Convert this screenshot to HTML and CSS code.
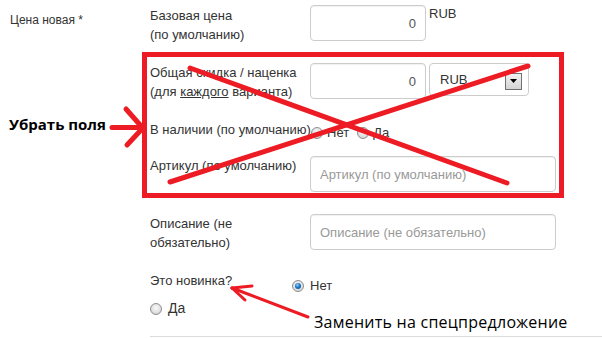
FILE: index.html
```html
<!DOCTYPE html>
<html lang="ru">
<head>
<meta charset="utf-8">
<link rel="stylesheet" href="styles.css">
</head>
<body>
<div class="page">
  <div class="group">
    <div class="group-label">Цена новая *</div>
    <div class="fields">
      <div class="grid">
        <label class="lbl lbl-first">Базовая цена<br>(по умолчанию)</label>
        <div class="ctrl">
          <input class="inp inp-num" type="text" value="0">
          <span class="unit">RUB</span>
        </div>

        <label class="lbl">Общая скидка / наценка<br>(для <u>каждого</u> варианта)</label>
        <div class="ctrl">
          <input class="inp inp-num" type="text" value="0">
          <div class="select">
            <span>RUB</span>
            <span class="select-btn"><svg width="7" height="4" viewBox="0 0 7 4"><path d="M0 0H7L3.5 4Z" fill="#000"/></svg></span>
          </div>
        </div>

        <label class="lbl lbl-nowrap">В наличии (по умолчанию)</label>
        <div class="ctrl radios">
          <span class="radio"></span><span class="rtext">Нет</span>
          <span class="radio"></span><span class="rtext">Да</span>
        </div>

        <label class="lbl">Артикул (по умолчанию)</label>
        <div class="ctrl">
          <input class="inp inp-wide" type="text" placeholder="Артикул (по умолчанию)">
        </div>

        <label class="lbl">Описание (не<br>обязательно)</label>
        <div class="ctrl">
          <input class="inp inp-wide" type="text" placeholder="Описание (не обязательно)">
        </div>
      </div>

      <div class="novelty">
        <div class="novelty-top">
          <span class="lbl novelty-label">Это новинка?</span>
          <span class="novelty-opt"><span class="radio radio-on"></span><span class="rtext">Нет</span></span>
        </div>
        <div class="novelty-opt novelty-yes"><span class="radio"></span><span class="rtext rtext-lg">Да</span></div>
      </div>
      <div class="divider"></div>
    </div>
  </div>

  <div class="note note-left">Убрать поля</div>
  <div class="note note-bottom">Заменить на спецпредложение</div>

  <svg class="marks" width="602" height="338" viewBox="0 0 602 338">
    <g stroke="#ed1c24" fill="none" stroke-linecap="round">
      <rect x="144.5" y="54.5" width="417" height="141" stroke-width="5" stroke-linecap="butt"/>
      <line x1="170" y1="182" x2="528" y2="66" stroke-width="5"/>
      <line x1="190" y1="68" x2="507" y2="183" stroke-width="5"/>
      <line x1="112" y1="127.5" x2="143" y2="127.5" stroke-width="5"/>
      <line x1="126" y1="109" x2="141" y2="126" stroke-width="5"/>
      <line x1="127" y1="145" x2="141" y2="130" stroke-width="5"/>
      <line x1="308" y1="317" x2="232" y2="288" stroke-width="3"/>
      <line x1="232" y1="288" x2="252" y2="286" stroke-width="3"/>
      <line x1="232" y1="288" x2="245" y2="300" stroke-width="3"/>
    </g>
  </svg>
</div>
</body>
</html>
```

FILE: styles.css
```css
* { box-sizing: border-box; }

html, body {
  margin: 0;
  padding: 0;
  background: #fff;
}

body {
  font-family: "Liberation Sans", Arial, sans-serif;
  font-size: 13px;
  line-height: 19px;
  color: #333;
}

.page {
  position: relative;
  width: 602px;
  height: 338px;
  overflow: hidden;
  padding: 5px 0 0 10px;
}

.group {
  display: flex;
  align-items: flex-start;
}

.group-label {
  width: 140px;
  flex: none;
  font-size: 12px;
  padding-top: 6px;
}

.fields {
  flex: 1;
}

.grid {
  display: grid;
  grid-template-columns: 160px 1fr;
  grid-template-rows: 58px 57px 36px 58px 57px;
  align-items: start;
}

.lbl {
  display: block;
}

.lbl-first {
  padding-top: 1px;
}

.lbl-nowrap {
  white-space: nowrap;
}

.ctrl {
  display: flex;
  align-items: flex-start;
}

.inp {
  height: 36px;
  border: 1px solid #ccc;
  border-radius: 4px;
  box-shadow: inset 0 1px 1px rgba(0, 0, 0, 0.06);
  font-family: "Liberation Sans", Arial, sans-serif;
  font-size: 13px;
  color: #555;
  padding: 0 9px;
  outline: none;
  background: #fff;
}

.inp::placeholder {
  color: #999;
}

.inp-num {
  width: 116px;
  text-align: right;
  padding-right: 9px;
}

.inp-wide {
  width: 246px;
}

.unit {
  margin-left: 3px;
  font-size: 13px;
  line-height: 14px;
  padding-top: 2px;
}

.select {
  margin-left: 3px;
  width: 100px;
  height: 33px;
  border: 1px solid #ccc;
  border-radius: 4px;
  display: flex;
  align-items: center;
  justify-content: space-between;
  padding: 0 6px 0 10px;
  font-size: 13px;
  color: #333;
}

.select-btn {
  width: 17px;
  height: 17px;
  border: 1px solid #707070;
  background: linear-gradient(#f2f2f2, #d4d4d4);
  display: flex;
  align-items: center;
  justify-content: center;
  margin-top: 3px;
}

.radios {
  align-items: center;
  padding-top: 3px;
}

.radio {
  width: 12px;
  height: 12px;
  border-radius: 50%;
  border: 1px solid #8f8f8f;
  background: radial-gradient(circle at 50% 40%, #fafafa 0, #e6e6e6 45%, #c8c8c8 100%);
  flex: none;
  display: inline-block;
  position: relative;
}

.radios .radio:first-child {
  margin-left: 1px;
}

.radio-on::after {
  content: "";
  position: absolute;
  left: 2px;
  top: 2px;
  width: 6px;
  height: 6px;
  border-radius: 50%;
  background: radial-gradient(circle at 40% 35%, #8fd0ff 0, #1d78c5 45%, #0c3e73 100%);
}

.rtext {
  margin-left: 4px;
  margin-right: 8px;
}

.novelty-top {
  display: flex;
  align-items: flex-start;
}

.novelty-label {
  width: 142px;
  flex: none;
}

.novelty-opt {
  display: flex;
  align-items: center;
}

.novelty-top .novelty-opt {
  padding-top: 5px;
}

.novelty-top .rtext {
  margin-left: 6px;
}

.novelty-yes {
  margin-top: 4px;
}

.rtext-lg {
  font-size: 14px;
  margin-left: 6px;
}

.divider {
  margin-top: 18px;
  border-top: 1px solid #ddd;
}

.note {
  position: absolute;
  color: #000;
  font-family: "Open Sans", "Noto Sans", sans-serif;
  white-space: nowrap;
}

.note-left {
  left: 9px;
  top: 115px;
  font-size: 15px;
  font-weight: 700;
}

.note-bottom {
  left: 314px;
  top: 313px;
  font-size: 16px;
  letter-spacing: 0.25px;
}

.marks {
  position: absolute;
  left: 0;
  top: 0;
  pointer-events: none;
}
```
